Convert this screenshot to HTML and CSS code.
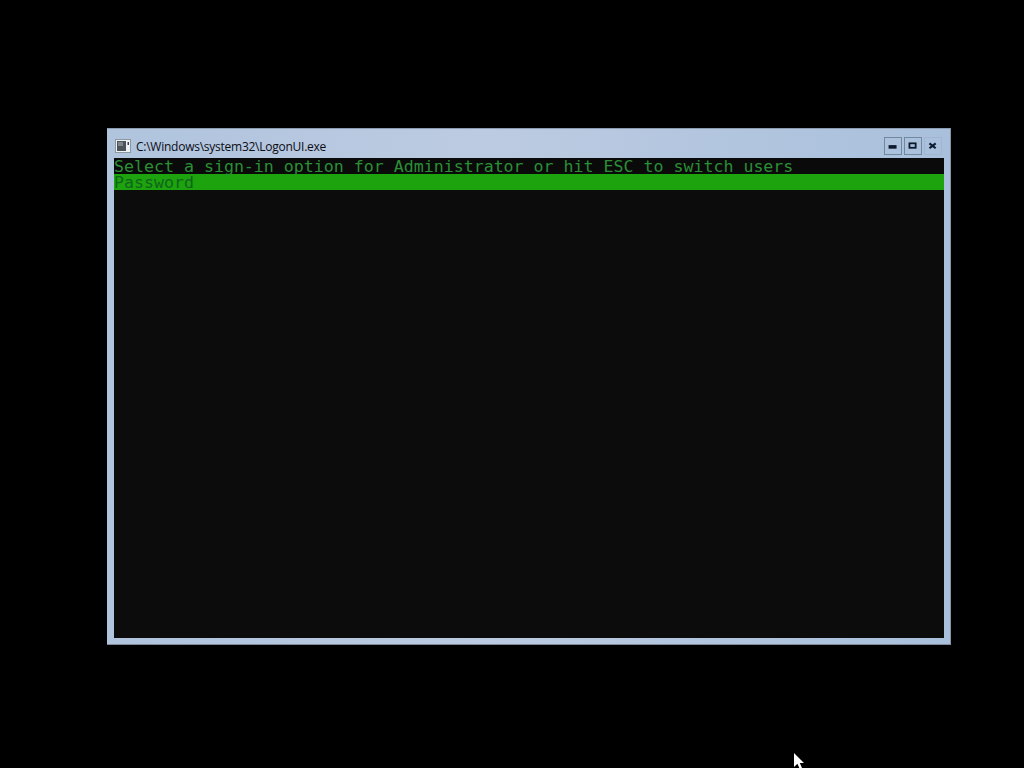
FILE: index.html
```html
<!DOCTYPE html>
<html lang="en">
<head>
<meta charset="utf-8">
<title>LogonUI</title>
<link rel="stylesheet" href="styles.css">
</head>
<body>
<div class="window">
  <div class="titlebar">
    <svg class="app-icon" width="16" height="14" viewBox="0 0 16 14">
      <rect x="0.5" y="0.5" width="15" height="13" fill="#eef2f5" stroke="#8d979e"/>
      <rect x="2" y="2" width="9" height="10" fill="#4c5459"/>
      <rect x="3" y="3" width="5" height="4" fill="#7d868b"/>
      <rect x="12.5" y="3" width="1.5" height="3" fill="#3b4247"/>
    </svg>
    <span class="title">C:\Windows\system32\LogonUI.exe</span>
    <div class="controls">
      <div class="btn btn-framed">
        <svg width="18" height="18" viewBox="0 0 18 18"><rect x="4" y="8" width="9" height="4" fill="#0d1a2e"/></svg>
      </div>
      <div class="btn btn-framed">
        <svg width="18" height="18" viewBox="0 0 18 18"><rect x="5" y="6" width="7" height="5" fill="none" stroke="#0d1a2e" stroke-width="2"/></svg>
      </div>
      <div class="btn btn-faint">
        <svg width="18" height="18" viewBox="0 0 18 18"><path d="M5 6 L12 11.5 M12 6 L5 11.5" fill="none" stroke="#0d1a2e" stroke-width="2.4"/></svg>
      </div>
    </div>
  </div>
  <div class="console">
    <div class="line">Select a sign-in option for Administrator or hit ESC to switch users</div>
    <div class="line line-selected">Password</div>
  </div>
</div>
<svg class="cursor" width="12" height="17" viewBox="0 0 12 17">
  <path d="M1 0 L1 14 L4.4 10.8 L6.8 16 L9 15 L6.8 10 L11 10 Z" fill="#fff"/>
</svg>
</body>
</html>
```
FILE: styles.css
```css
html, body {
  margin: 0;
  height: 100%;
  background: #000;
  overflow: hidden;
}
body {
  position: relative;
  width: 1024px;
  height: 768px;
}
.window {
  position: absolute;
  left: 107px;
  top: 128px;
  width: 844px;
  height: 517px;
  box-sizing: border-box;
  padding: 0 6px 6px 7px;
  background: #a9c0dc;
  background-image: linear-gradient(90deg, #b0c4de 0%, #bccbe1 45%, #a9c0dc 100%);
  border-top: 1px solid #8b9bb0;
  border-right: 1px solid #8a93a3;
  border-bottom: 1px solid #7f8896;
  display: flex;
  flex-direction: column;
}
.titlebar {
  height: 29px;
  display: flex;
  align-items: center;
  flex: none;
}
.app-icon {
  margin-left: 1px;
  margin-top: 4px;
  flex: none;
}
.title {
  margin-left: 5px;
  margin-top: 5px;
  font-family: "Open Sans", "Noto Sans", sans-serif;
  font-size: 12px;
  letter-spacing: -0.25px;
  color: #0c0c14;
  white-space: nowrap;
}
.controls {
  margin-left: auto;
  margin-right: 2px;
  margin-top: 5px;
  display: flex;
  gap: 2px;
}
.btn {
  width: 18px;
  height: 18px;
  box-sizing: border-box;
  display: flex;
  align-items: center;
  justify-content: center;
}
.btn-framed {
  border: 1px solid #72889f;
}
.btn-faint {
  border: 1px solid #a3b6cf;
}
.console {
  flex: 1;
  background: #0c0c0c;
  font-family: "DejaVu Sans Mono", monospace;
  font-size: 16.6px;
  color: #2b8f36;
}
.line {
  height: 16px;
  line-height: 18px;
  white-space: pre;
  background: #0a0a0a;
}
.line-selected {
  background: #1ca30e;
  color: #10651a;
}
.cursor {
  position: absolute;
  left: 793px;
  top: 753px;
}
```
